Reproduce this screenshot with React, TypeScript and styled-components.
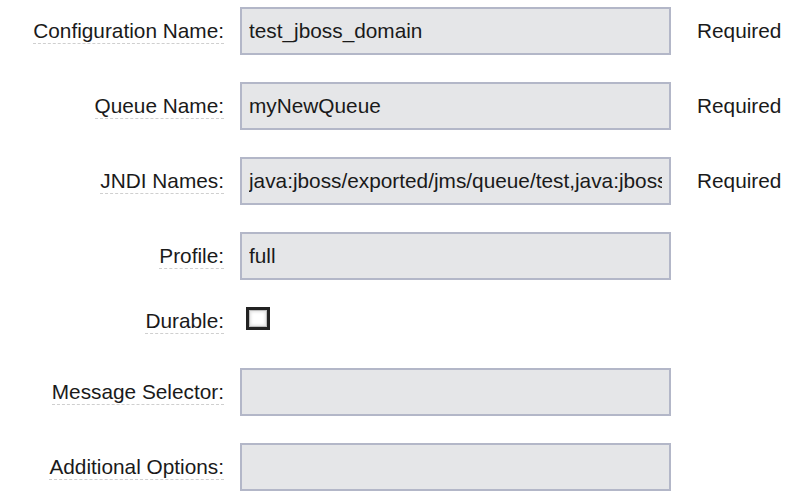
import React from 'react';
import styled, { createGlobalStyle } from 'styled-components';

interface FieldRow {
  label: string;
  value?: string;
  required?: boolean;
  kind: 'text' | 'checkbox';
}

const rows: FieldRow[] = [
  { label: 'Configuration Name:', value: 'test_jboss_domain', required: true, kind: 'text' },
  { label: 'Queue Name:', value: 'myNewQueue', required: true, kind: 'text' },
  {
    label: 'JNDI Names:',
    value: 'java:jboss/exported/jms/queue/test,java:jboss/exported/jms/queue/other',
    required: true,
    kind: 'text',
  },
  { label: 'Profile:', value: 'full', kind: 'text' },
  { label: 'Durable:', kind: 'checkbox' },
  { label: 'Message Selector:', value: '', kind: 'text' },
  { label: 'Additional Options:', value: '', kind: 'text' },
];

function App() {
  return (
    <>
      <GlobalStyle />
      <StyledForm>
        {rows.map((row) => {
          const checkbox = row.kind === 'checkbox';
          return (
            <StyledRow key={row.label} checkbox={checkbox}>
              <StyledLabelCell checkbox={checkbox}>
                <StyledLabel>{row.label}</StyledLabel>
              </StyledLabelCell>
              {checkbox ? (
                <StyledCheckbox aria-label={row.label} role="checkbox" aria-checked="false" />
              ) : (
                <StyledInput readOnly value={row.value} />
              )}
              {row.required && <StyledNote>Required</StyledNote>}
            </StyledRow>
          );
        })}
      </StyledForm>
    </>
  );
}

const GlobalStyle = createGlobalStyle`
  body {
    margin: 0;
    background: #ffffff;
    font-family: 'Liberation Sans', Arial, sans-serif;
  }
`;

const StyledForm = styled.div`
  display: flex;
  flex-direction: column;
  gap: 27px;
  padding-top: 7px;
  width: 802px;
`;

const StyledRow = styled.div<{ checkbox: boolean }>`
  display: grid;
  grid-template-columns: 224px 431px auto;
  column-gap: 16px;
  align-items: ${({ checkbox }) => (checkbox ? 'start' : 'center')};
  height: ${({ checkbox }) => (checkbox ? '34px' : '48px')};
`;

const StyledLabelCell = styled.div<{ checkbox: boolean }>`
  text-align: right;
  padding-top: ${({ checkbox }) => (checkbox ? '2px' : '0')};
`;

const StyledLabel = styled.span`
  display: inline-block;
  color: #1a1a1a;
  font-size: 20.8px;
  line-height: 24px;
  border-bottom: 1px dashed #cfcfcf;
`;

const StyledInput = styled.input`
  box-sizing: border-box;
  width: 431px;
  height: 48px;
  margin: 0;
  padding: 0 7px;
  border: 2px solid #b3b7c8;
  background: #e5e6e8;
  color: #1a1a1a;
  font-family: 'Liberation Sans', Arial, sans-serif;
  font-size: 20.8px;
  outline: none;
`;

const StyledCheckbox = styled.div`
  box-sizing: border-box;
  width: 24px;
  height: 23px;
  margin-left: 6px;
  border: 3px solid #222222;
  background: #ffffff;
  box-shadow: inset 0 0 0 1px #bdbdbd, inset 0 0 3px 2px #e0e0e0;
`;

const StyledNote = styled.span`
  margin-left: 10px;
  color: #1a1a1a;
  font-size: 20.8px;
  white-space: nowrap;
`;

export default App;
